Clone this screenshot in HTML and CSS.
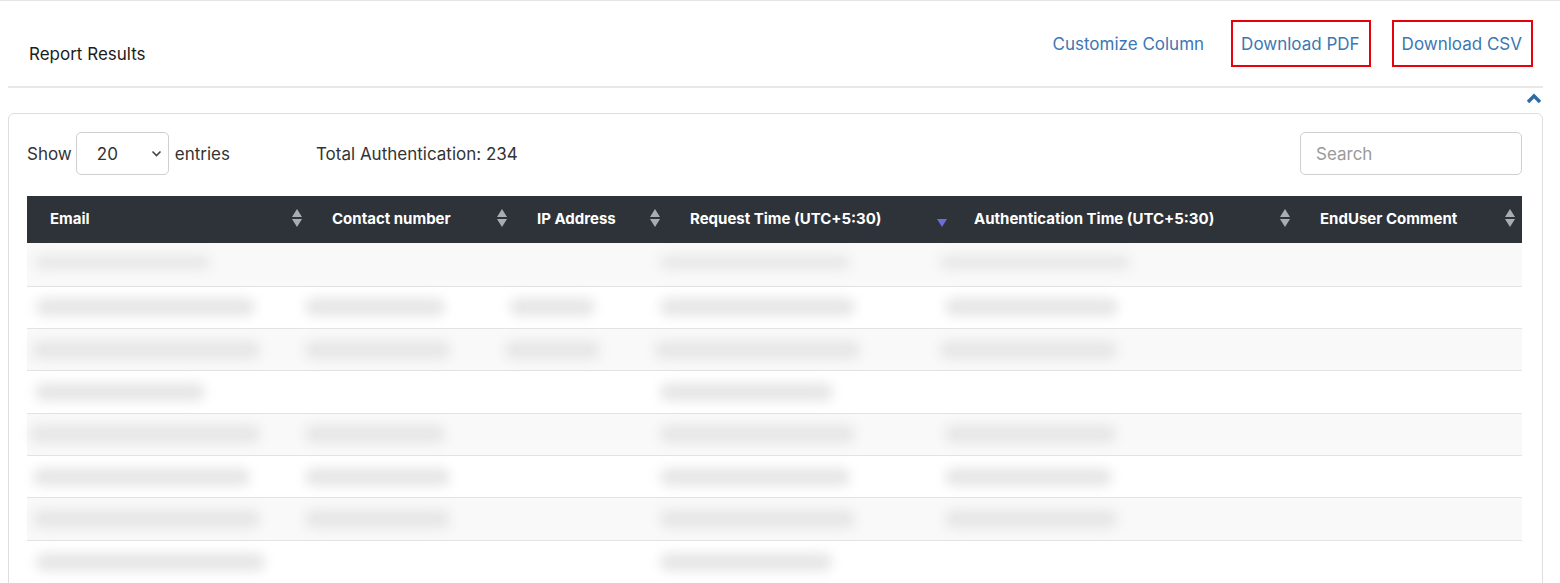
FILE: index.html
```html
<!DOCTYPE html>
<html lang="en">
<head>
<meta charset="utf-8">
<title>Report Results</title>
<link rel="stylesheet" href="styles.css">
</head>
<body>
<div class="page">
    <div class="topbar">
        <h2 class="title">Report Results</h2>
        <div class="actions">
            <a href="#" class="act">Customize Column</a>
            <a href="#" class="act boxed">Download PDF</a>
            <a href="#" class="act boxed">Download CSV</a>
        </div>
    </div>
    <div class="toggle">
        <svg width="16" height="11" viewBox="0 0 16 11"><path d="M2 9 L8 3 L14 9" fill="none" stroke="#2f6aa8" stroke-width="3.4" stroke-linejoin="miter"/></svg>
    </div>
    <div class="card">
        <div class="controls">
            <div class="left">
                <span>Show</span>
                <div class="select">
                    <span>20</span>
                    <svg width="11" height="7" viewBox="0 0 11 7"><path d="M1.5 1.5 L5.5 5.5 L9.5 1.5" fill="none" stroke="#444" stroke-width="1.6"/></svg>
                </div>
                <span>entries</span>
                <span class="total">Total Authentication: 234</span>
            </div>
            <div class="search">Search</div>
        </div>
        <table class="grid">
            <colgroup>
                <col style="width:282px">
                <col style="width:205px">
                <col style="width:153px">
                <col style="width:284px">
                <col style="width:346px">
                <col style="width:225px">
            </colgroup>
            <thead>
                <tr>
                    <th>Email<i class="sort"></i></th>
                    <th>Contact number<i class="sort"></i></th>
                    <th>IP Address<i class="sort"></i></th>
                    <th>Request Time (UTC+5:30)<i class="sort desc"></i></th>
                    <th>Authentication Time (UTC+5:30)<i class="sort"></i></th>
                    <th>EndUser Comment<i class="sort"></i></th>
                </tr>
            </thead>
            <tbody>
                <tr>
                    <td><div class="blur thin" style="width:175px;margin-left:8px"></div></td>
                    <td></td><td></td>
                    <td><div class="blur thin" style="width:190px;margin-left:-7px"></div></td>
                    <td><div class="blur thin" style="width:190px;margin-left:-11px"></div></td>
                    <td></td>
                </tr>
                <tr>
                    <td><div class="blur" style="width:219px;margin-left:9px"></div></td>
                    <td><div class="blur" style="width:140px;margin-left:-4px"></div></td>
                    <td><div class="blur" style="width:85px;margin-left:-4px"></div></td>
                    <td><div class="blur" style="width:195px;margin-left:-7px"></div></td>
                    <td><div class="blur" style="width:173px;margin-left:-6px"></div></td>
                    <td></td>
                </tr>
                <tr>
                    <td><div class="blur" style="width:228px;margin-left:5px"></div></td>
                    <td><div class="blur" style="width:145px;margin-left:-4px"></div></td>
                    <td><div class="blur" style="width:95px;margin-left:-9px"></div></td>
                    <td><div class="blur" style="width:205px;margin-left:-12px"></div></td>
                    <td><div class="blur" style="width:177px;margin-left:-11px"></div></td>
                    <td></td>
                </tr>
                <tr>
                    <td><div class="blur" style="width:170px;margin-left:8px"></div></td>
                    <td></td><td></td>
                    <td><div class="blur" style="width:173px;margin-left:-7px"></div></td>
                    <td></td><td></td>
                </tr>
                <tr>
                    <td><div class="blur" style="width:230px;margin-left:3px"></div></td>
                    <td><div class="blur" style="width:140px;margin-left:-4px"></div></td>
                    <td></td>
                    <td><div class="blur" style="width:195px;margin-left:-7px"></div></td>
                    <td><div class="blur" style="width:171px;margin-left:-6px"></div></td>
                    <td></td>
                </tr>
                <tr>
                    <td><div class="blur" style="width:217px;margin-left:6px"></div></td>
                    <td><div class="blur" style="width:145px;margin-left:-4px"></div></td>
                    <td></td>
                    <td><div class="blur" style="width:190px;margin-left:-7px"></div></td>
                    <td><div class="blur" style="width:167px;margin-left:-6px"></div></td>
                    <td></td>
                </tr>
                <tr>
                    <td><div class="blur" style="width:227px;margin-left:6px"></div></td>
                    <td><div class="blur" style="width:145px;margin-left:-4px"></div></td>
                    <td></td>
                    <td><div class="blur" style="width:195px;margin-left:-7px"></div></td>
                    <td><div class="blur" style="width:172px;margin-left:-6px"></div></td>
                    <td></td>
                </tr>
                <tr>
                    <td><div class="blur" style="width:229px;margin-left:9px"></div></td>
                    <td></td><td></td>
                    <td><div class="blur" style="width:172px;margin-left:-7px"></div></td>
                    <td></td><td></td>
                </tr>
            </tbody>
        </table>
    </div>
</div>
</body>
</html>
```

FILE: styles.css
```css
*{
    margin:0;
    padding:0;
    box-sizing:border-box;
}
body{
    background:#fff;
    color:#333;
    font-family:Inter, "Noto Sans", Arial, sans-serif;
    border-top:1px solid #e6e6e6;
    overflow:hidden;
}
.page{
    margin:0 17px 0 8px;
}
.topbar{
    display:flex;
    justify-content:space-between;
    align-items:flex-start;
    height:87px;
    border-bottom:2px solid #e8e8e8;
}
.title{
    font-size:17px;
    font-weight:400;
    color:#1d1d1d;
    margin:43px 0 0 21px;
}
.actions{
    display:flex;
    align-items:center;
    margin:19px 10px 0 0;
}
.act{
    color:#3b77b3;
    text-decoration:none;
    font-size:17px;
    height:47px;
    line-height:45px;
    padding:0 9px 0 8px;
    border:2px solid transparent;
}
.act + .act{
    margin-left:21px;
}
.act:first-child{
    margin-right:4px;
    padding:0;
}
.boxed{
    border-color:#e8000b;
}
.toggle{
    display:flex;
    justify-content:flex-end;
    padding:5px 1px 0 0;
    height:25px;
}
.card{
    border:1px solid #dedede;
    border-radius:6px;
    padding:18px 20px 0 18px;
    height:600px;
}
.controls{
    display:flex;
    justify-content:space-between;
    align-items:center;
    margin-bottom:21px;
}
.left{
    display:flex;
    align-items:center;
    font-size:17px;
    color:#333;
}
.select{
    width:93px;
    height:43px;
    border:1px solid #cfcfcf;
    border-radius:5px;
    margin:0 6px 0 4px;
    display:flex;
    align-items:center;
    justify-content:space-between;
    padding:0 6px 0 20px;
    color:#333;
}
.total{
    margin-left:86px;
}
.search{
    width:222px;
    height:43px;
    border:1px solid #cfcfcf;
    border-radius:5px;
    color:#9a9a9a;
    font-size:17px;
    line-height:43px;
    padding-left:15px;
}
.grid{
    width:1495px;
    border-collapse:collapse;
    table-layout:fixed;
}
.grid th{
    background:#2d3339;
    color:#fff;
    font-size:15px;
    font-weight:700;
    text-align:left;
    height:47px;
    padding:0 12px 3px 23px;
    position:relative;
    white-space:nowrap;
}
.grid td{
    height:42.4px;
    border-top:1px solid #e3e3e3;
    padding:0;
    overflow:visible;
}
.grid thead + tbody tr:first-child td{
    border-top:none;
    height:43px;
}
.grid tbody tr:nth-child(odd) td{
    background:#f9f9f9;
}
.sort{
    position:absolute;
    right:8px;
    top:13px;
    width:9px;
    height:18px;
}
.sort::before,
.sort::after{
    content:"";
    position:absolute;
    left:0;
    border-left:5px solid transparent;
    border-right:5px solid transparent;
}
.sort::before{
    top:0;
    border-bottom:8px solid #a9adb1;
}
.sort::after{
    top:10px;
    border-top:8px solid #a9adb1;
}
.sort.desc{
    right:5px;
    top:23px;
}
.sort.desc::before{
    display:none;
}
.sort.desc::after{
    top:0;
    border-top-color:#6b6fd6;
}
.blur{
    height:18px;
    background:#e6e6e6;
    border-radius:8px;
    filter:blur(6px);
}
.blur.thin{
    height:13px;
    margin-top:-4px;
}
```
